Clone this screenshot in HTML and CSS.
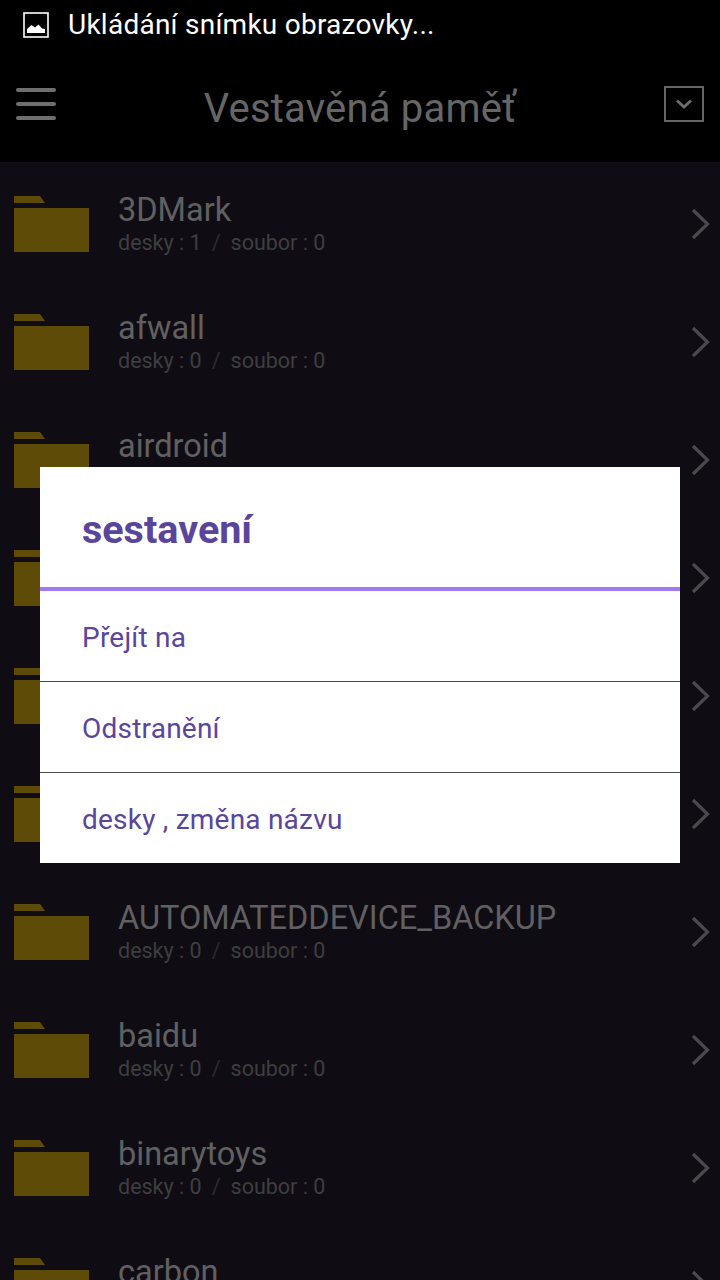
FILE: index.html
```html
<!DOCTYPE html>
<html lang="cs">
<head>
<meta charset="utf-8">
<title>Vestavěná paměť</title>
<link rel="stylesheet" href="styles.css">
</head>
<body>
<div class="screen">
  <div class="status">
    <svg class="status-icon" width="26" height="26" viewBox="0 0 26 26"><rect x="1" y="1" width="24" height="24" fill="none" stroke="#fff" stroke-width="1.600"/><path d="M4 21V17L8.500 13L12 15.500L15.500 12.500L19 16.500L22 17V21Z" fill="#fff"/></svg>
    <span class="status-text">Ukládání snímku obrazovky...</span>
  </div>
  <header class="top">
    <div class="burger"><i></i><i></i><i></i></div>
    <h1 class="top-title">Vestavěná paměť</h1>
    <div class="dropdown"><svg width="18" height="10" viewBox="0 0 18 10"><path d="M2 1.500L9 8L16 1.500" fill="none" stroke="#6e6e6e" stroke-width="2.800"/></svg></div>
  </header>
  <main class="list">
    <div class="row"><svg class="folder" width="75" height="56" viewBox="0 0 75 56"><path d="M0 0H26L31 7H0ZM0 12H75V56H0Z" fill="#5f4b08"/></svg><div class="info"><div class="name">3DMark</div><div class="meta"><span>desky : 1</span><span class="sep">/</span><span>soubor : 0</span></div></div><svg class="chev" width="20" height="32" viewBox="0 0 20 32"><path d="M2 2L16.500 16L2 30" fill="none" stroke="#4a4a4d" stroke-width="3.200"/></svg></div>
    <div class="row"><svg class="folder" width="75" height="56" viewBox="0 0 75 56"><path d="M0 0H26L31 7H0ZM0 12H75V56H0Z" fill="#5f4b08"/></svg><div class="info"><div class="name">afwall</div><div class="meta"><span>desky : 0</span><span class="sep">/</span><span>soubor : 0</span></div></div><svg class="chev" width="20" height="32" viewBox="0 0 20 32"><path d="M2 2L16.500 16L2 30" fill="none" stroke="#4a4a4d" stroke-width="3.200"/></svg></div>
    <div class="row"><svg class="folder" width="75" height="56" viewBox="0 0 75 56"><path d="M0 0H26L31 7H0ZM0 12H75V56H0Z" fill="#5f4b08"/></svg><div class="info"><div class="name">airdroid</div><div class="meta"><span>desky : 0</span><span class="sep">/</span><span>soubor : 0</span></div></div><svg class="chev" width="20" height="32" viewBox="0 0 20 32"><path d="M2 2L16.500 16L2 30" fill="none" stroke="#4a4a4d" stroke-width="3.200"/></svg></div>
    <div class="row"><svg class="folder" width="75" height="56" viewBox="0 0 75 56"><path d="M0 0H26L31 7H0ZM0 12H75V56H0Z" fill="#5f4b08"/></svg><div class="info"><div class="name">Android</div><div class="meta"><span>desky : 0</span><span class="sep">/</span><span>soubor : 0</span></div></div><svg class="chev" width="20" height="32" viewBox="0 0 20 32"><path d="M2 2L16.500 16L2 30" fill="none" stroke="#4a4a4d" stroke-width="3.200"/></svg></div>
    <div class="row"><svg class="folder" width="75" height="56" viewBox="0 0 75 56"><path d="M0 0H26L31 7H0ZM0 12H75V56H0Z" fill="#5f4b08"/></svg><div class="info"><div class="name">AppProjects</div><div class="meta"><span>desky : 0</span><span class="sep">/</span><span>soubor : 0</span></div></div><svg class="chev" width="20" height="32" viewBox="0 0 20 32"><path d="M2 2L16.500 16L2 30" fill="none" stroke="#4a4a4d" stroke-width="3.200"/></svg></div>
    <div class="row"><svg class="folder" width="75" height="56" viewBox="0 0 75 56"><path d="M0 0H26L31 7H0ZM0 12H75V56H0Z" fill="#5f4b08"/></svg><div class="info"><div class="name">Audio</div><div class="meta"><span>desky : 0</span><span class="sep">/</span><span>soubor : 0</span></div></div><svg class="chev" width="20" height="32" viewBox="0 0 20 32"><path d="M2 2L16.500 16L2 30" fill="none" stroke="#4a4a4d" stroke-width="3.200"/></svg></div>
    <div class="row"><svg class="folder" width="75" height="56" viewBox="0 0 75 56"><path d="M0 0H26L31 7H0ZM0 12H75V56H0Z" fill="#5f4b08"/></svg><div class="info"><div class="name">AUTOMATEDDEVICE_BACKUP</div><div class="meta"><span>desky : 0</span><span class="sep">/</span><span>soubor : 0</span></div></div><svg class="chev" width="20" height="32" viewBox="0 0 20 32"><path d="M2 2L16.500 16L2 30" fill="none" stroke="#4a4a4d" stroke-width="3.200"/></svg></div>
    <div class="row"><svg class="folder" width="75" height="56" viewBox="0 0 75 56"><path d="M0 0H26L31 7H0ZM0 12H75V56H0Z" fill="#5f4b08"/></svg><div class="info"><div class="name">baidu</div><div class="meta"><span>desky : 0</span><span class="sep">/</span><span>soubor : 0</span></div></div><svg class="chev" width="20" height="32" viewBox="0 0 20 32"><path d="M2 2L16.500 16L2 30" fill="none" stroke="#4a4a4d" stroke-width="3.200"/></svg></div>
    <div class="row"><svg class="folder" width="75" height="56" viewBox="0 0 75 56"><path d="M0 0H26L31 7H0ZM0 12H75V56H0Z" fill="#5f4b08"/></svg><div class="info"><div class="name">binarytoys</div><div class="meta"><span>desky : 0</span><span class="sep">/</span><span>soubor : 0</span></div></div><svg class="chev" width="20" height="32" viewBox="0 0 20 32"><path d="M2 2L16.500 16L2 30" fill="none" stroke="#4a4a4d" stroke-width="3.200"/></svg></div>
    <div class="row"><svg class="folder" width="75" height="56" viewBox="0 0 75 56"><path d="M0 0H26L31 7H0ZM0 12H75V56H0Z" fill="#5f4b08"/></svg><div class="info"><div class="name">carbon</div><div class="meta"><span>desky : 0</span><span class="sep">/</span><span>soubor : 0</span></div></div><svg class="chev" width="20" height="32" viewBox="0 0 20 32"><path d="M2 2L16.500 16L2 30" fill="none" stroke="#4a4a4d" stroke-width="3.200"/></svg></div>
  </main>
  <div class="dialog">
    <div class="dialog-title">sestavení</div>
    <div class="dialog-item">Přejít na</div>
    <div class="dialog-item bordered">Odstranění</div>
    <div class="dialog-item bordered">desky , změna názvu</div>
  </div>
</div>
</body>
</html>
```
FILE: styles.css
```css
* { box-sizing: border-box; }
html, body { margin: 0; padding: 0; }
body { background: #000; font-family: Roboto, sans-serif; }
.screen { position: relative; width: 720px; height: 1280px; overflow: hidden; display: flex; flex-direction: column; background: #000; }
.status { height: 50px; flex: none; display: flex; align-items: center; padding-left: 23px; gap: 19px; }
.status-icon { flex: none; }
.status-text { color: #fff; font-size: 28px; letter-spacing: 0.25px; line-height: 50px; }
.top { height: 112px; flex: none; display: flex; align-items: center; position: relative; justify-content: center; }
.burger { position: absolute; left: 16px; top: 38px; width: 40px; display: flex; flex-direction: column; gap: 10px; }
.burger i { display: block; height: 4px; border-radius: 2px; background: #6e6e6e; }
.top-title { margin: 0; font-size: 40px; letter-spacing: 0.2px; font-weight: 400; color: #666; line-height: 1; position: relative; top: 3px; }
.dropdown { position: absolute; right: 16px; top: 36px; width: 40px; height: 36px; border: 2px solid #666; display: flex; align-items: center; justify-content: center; }
.list { flex: 1; background: #0f0d13; min-height: 0; }
.row { height: 118px; display: flex; align-items: flex-start; position: relative; padding: 34px 0 0 14px; }
.folder { flex: none; }
.info { margin-left: 29px; margin-top: -3px; }
.name { font-size: 32.500px; line-height: 34px; color: #606062; white-space: nowrap; }
.meta { font-size: 21.500px; line-height: 30px; margin-top: 1px; color: #3e3e40; display: flex; white-space: nowrap; }
.sep { margin: 0 10px; color: #2c2c2f; }
.chev { position: absolute; right: 9px; top: 46px; }
.dialog { position: absolute; left: 40px; top: 467px; width: 640px; height: 396px; background: #fff; color: #5a459c; display: flex; flex-direction: column; }
.dialog-title { height: 124px; flex: none; padding: 2px 42px 0; font-size: 39.500px; font-weight: 700; line-height: 122px; border-bottom: 4px solid #a077f5; }
.dialog-item { flex: 1; padding: 2px 42px 0; display: flex; align-items: center; font-size: 28px; letter-spacing: 0.22px; }
.bordered { border-top: 1px solid #4c4c4c; }
```
